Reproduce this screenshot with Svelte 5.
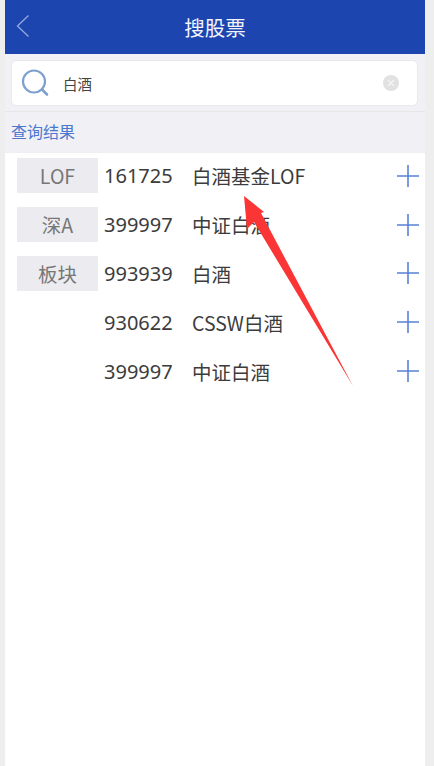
<script>
	const rows = [
		{ tag: 'LOF', code: '161725', name: '白酒基金LOF' },
		{ tag: '深A', code: '399997', name: '中证白酒' },
		{ tag: '板块', code: '993939', name: '白酒' },
		{ tag: '', code: '930622', name: 'CSSW白酒' },
		{ tag: '', code: '399997', name: '中证白酒' }
	]
</script>

<div class="frame">
	<div class="page">
		<header class="topbar">
			<svg class="back" width="14" height="26" viewBox="0 0 14 26">
				<path d="M12.5 2.5 L1.5 13 L12.5 23.5" fill="none" stroke="#8fa6dc" stroke-width="1.4" />
			</svg>
			<h1>搜股票</h1>
		</header>

		<div class="search-wrap">
			<div class="search">
				<svg class="lens" width="28" height="28" viewBox="0 0 28 28">
					<circle cx="13" cy="12.5" r="11" fill="none" stroke="#7f9fcf" stroke-width="2.2" />
					<path d="M21 20.5 L26 25.5" fill="none" stroke="#7f9fcf" stroke-width="2.6" stroke-linecap="round" />
				</svg>
				<span class="query">白酒</span>
				<span class="clear">
					<svg width="16" height="16" viewBox="0 0 16 16">
						<circle cx="8" cy="8" r="8" fill="#e1e1e1" />
						<path d="M5 5 L11 11 M11 5 L5 11" stroke="#f6f6f6" stroke-width="1.2" />
					</svg>
				</span>
			</div>
		</div>

		<div class="section">查询结果</div>

		<ul class="list">
			{#each rows as row}
				<li>
					<span class="tag" class:empty={!row.tag}>{row.tag}</span>
					<span class="code">{row.code}</span>
					<span class="name">{row.name}</span>
					<svg class="plus" width="22" height="22" viewBox="0 0 22 22">
						<path d="M0 11 H22 M11 0 V22" stroke="#5a80d6" stroke-width="1.6" />
					</svg>
				</li>
			{/each}
		</ul>
	</div>

	<svg class="arrow" width="434" height="766" viewBox="0 0 434 766">
		<polygon points="244,196 264,212 261,213 353,386 254,222 247,229" fill="#fb3535" />
	</svg>
</div>

<style>
	:global(body) {
		margin: 0;
		background: #eeeeee;
	}

	.frame {
		position: relative;
		width: 434px;
		height: 766px;
		padding: 0 9px 0 5px;
		box-sizing: border-box;
		overflow: hidden;
		font-family: "Noto Sans CJK SC", "Liberation Sans", sans-serif;
	}

	.page {
		height: 100%;
		background: #fff;
	}

	.topbar {
		display: flex;
		align-items: center;
		justify-content: center;
		position: relative;
		height: 54px;
		background: #1c45b0;
	}

	.back {
		position: absolute;
		left: 11px;
		top: 13px;
	}

	h1 {
		margin: 0;
		font-size: 20.5px;
		font-weight: 400;
		color: #f2f4fb;
	}

	.search-wrap {
		padding: 6px 7px 5px 6px;
		background: #f1f1f5;
		border-bottom: 1px solid #e6e6e8;
	}

	.search {
		display: flex;
		align-items: center;
		height: 44px;
		padding: 0 18px 0 9px;
		background: #fff;
		border: 1px solid #e9e9ec;
		border-radius: 5px;
	}

	.lens {
		flex: none;
	}

	.query {
		flex: 1;
		margin-left: 14px;
		font-size: 14.5px;
		color: #444;
	}

	.clear {
		display: flex;
	}

	.section {
		height: 40px;
		padding-left: 6px;
		line-height: 38px;
		font-size: 16px;
		color: #4a78cf;
		background: #f1f1f5;
		box-sizing: border-box;
	}

	.list {
		margin: 0;
		padding: 0;
		list-style: none;
		border-top: 1px solid #efeff2;
	}

	li {
		display: flex;
		align-items: center;
		height: 48.8px;
		padding: 0 6px 3px 12px;
		box-sizing: border-box;
	}

	.tag {
		flex: none;
		width: 81px;
		height: 35px;
		line-height: 35px;
		text-align: center;
		font-size: 19.5px;
		color: #777;
		background: #ececf0;
	}

	.tag.empty {
		background: none;
	}

	.code {
		flex: none;
		width: 88px;
		margin-left: 6px;
		font-size: 20px;
		color: #3c3c3c;
		font-family: "Noto Sans", "Liberation Sans", sans-serif;
	}

	.name {
		flex: 1;
		font-size: 19.5px;
		color: #3c3c3c;
	}

	.plus {
		flex: none;
	}

	.arrow {
		position: absolute;
		left: 0;
		top: 0;
		pointer-events: none;
	}
</style>
